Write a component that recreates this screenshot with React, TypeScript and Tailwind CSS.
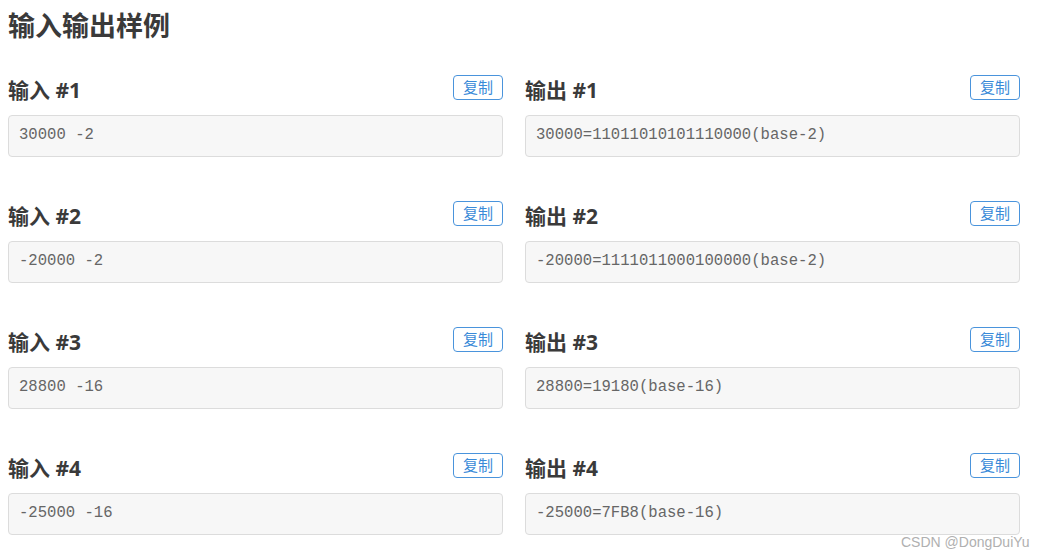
import React from "react";

type Sample = { input: string; output: string };

const samples: Sample[] = [
  { input: "30000 -2", output: "30000=11011010101110000(base-2)" },
  { input: "-20000 -2", output: "-20000=1111011000100000(base-2)" },
  { input: "28800 -16", output: "28800=19180(base-16)" },
  { input: "-25000 -16", output: "-25000=7FB8(base-16)" },
];

const sans = "font-['Open_Sans','Noto_Sans_CJK_SC',sans-serif]";

function SampleBox({ label, value }: { label: string; value: string }) {
  return (
    <div className="flex-1 min-w-0">
      <div className="flex justify-between h-[28px]">
        <h3 className={`${sans} text-[21px] leading-[24px] pt-[3px] font-bold text-[#3a3a3a]`}>{label}</h3>
        <button
          className={`${sans} h-[25px] w-[50px] rounded-[4px] border border-[#4a94dc] text-[#3a8ad8] text-[15px] leading-[23px] bg-white`}
        >
          复制
        </button>
      </div>
      <pre className="mt-[12px] h-[42px] flex items-center px-[10px] border border-[#dcdcdc] bg-[#f7f7f7] rounded-[4px] font-['Liberation_Mono',monospace] text-[15.6px] text-[#666]">
        {value}
      </pre>
    </div>
  );
}

export default function App() {
  return (
    <div className="relative w-[1043px] h-[558px] bg-white overflow-hidden pl-[8px] pr-[23px] pt-[8px]">
      <h2 className={`${sans} text-[27px] leading-[36px] font-bold text-[#3a3a3a]`}>输入输出样例</h2>
      <div className="mt-[31px] flex flex-col gap-[44px]">
        {samples.map((s, i) => (
          <div key={i} className="flex gap-[22px]">
            <SampleBox label={`输入 #${i + 1}`} value={s.input} />
            <SampleBox label={`输出 #${i + 1}`} value={s.output} />
          </div>
        ))}
      </div>
      <span className="absolute left-[901px] top-[532px] font-['Liberation_Sans','Noto_Sans_CJK_SC',sans-serif] text-[14px] text-[#b0b0b0]">
        CSDN @DongDuiYu
      </span>
    </div>
  );
}
